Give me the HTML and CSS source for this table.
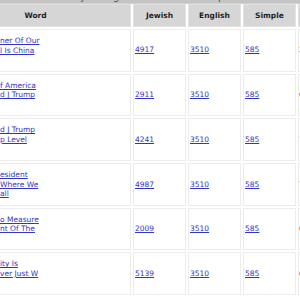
FILE: index.html
```html
<!DOCTYPE html>
<html>
<head>
<meta charset="utf-8">
<link rel="stylesheet" href="styles.css">
</head>
<body>
<div class="topbar"><span class="g g1">y</span><span class="g g2">g</span><span class="g g3">p</span></div>
<table class="results">
  <colgroup>
    <col class="c-word"><col class="c-num"><col class="c-num"><col class="c-num"><col class="c-more">
  </colgroup>
  <thead>
    <tr><th>Word</th><th>Jewish</th><th>English</th><th>Simple</th><th></th></tr>
  </thead>
  <tbody>
    <tr>
      <td class="word"><div class="wrap"><a href="#">ner Of Our<br>l Is China</a></div></td>
      <td class="num"><a href="#">4917</a></td><td class="num"><a href="#">3510</a></td><td class="num"><a href="#">585</a></td><td class="more red">2</td>
    </tr>
    <tr>
      <td class="word"><div class="wrap"><a href="#">f America<br>d J Trump</a></div></td>
      <td class="num"><a href="#">2911</a></td><td class="num"><a href="#">3510</a></td><td class="num"><a href="#">585</a></td><td class="more">6</td>
    </tr>
    <tr>
      <td class="word"><div class="wrap"><a href="#">d J Trump<br>p Level</a></div></td>
      <td class="num"><a href="#">4241</a></td><td class="num"><a href="#">3510</a></td><td class="num"><a href="#">585</a></td><td class="more">1</td>
    </tr>
    <tr>
      <td class="word"><div class="wrap"><a href="#">esident<br>Where We<br>all</a></div></td>
      <td class="num"><a href="#">4987</a></td><td class="num"><a href="#">3510</a></td><td class="num"><a href="#">585</a></td><td class="more">7</td>
    </tr>
    <tr>
      <td class="word"><div class="wrap"><a href="#">o Measure<br>nt Of The</a></div></td>
      <td class="num"><a href="#">2009</a></td><td class="num"><a href="#">3510</a></td><td class="num"><a href="#">585</a></td><td class="more">6</td>
    </tr>
    <tr>
      <td class="word"><div class="wrap"><a href="#">ity Is<br>ver Just W</a></div></td>
      <td class="num"><a href="#">5139</a></td><td class="num"><a href="#">3510</a></td><td class="num"><a href="#">585</a></td><td class="more">6</td>
    </tr>
  </tbody>
</table>
</body>
</html>
```
FILE: styles.css
```css
html, body {
  margin: 0;
  padding: 0;
  overflow: hidden;
  background: #fff;
  font-family: "DejaVu Sans", Verdana, sans-serif;
  font-size: 7.5px;
  line-height: 9.7px;
  color: #222;
}
.topbar {
  height: 3px;
  background: #c4c4c4;
  border-bottom: 1px solid #d0d0d0;
  overflow: hidden;
  position: relative;
}
.g {
  position: absolute;
  top: -8px;
  font-size: 10px;
  line-height: 10px;
  color: #555;
}
.g1 { left: 80px; }
.g2 { left: 113px; }
.g3 { left: 218px; }
.results {
  margin-left: -62px;
  border-collapse: separate;
  border-spacing: 2px;
  table-layout: fixed;
  width: 417px;
  margin-top: -2px;
}
.c-word { width: 191px; }
.c-num { width: 53px; }
.c-more { width: 55px; }
th {
  background: #d6d6d6;
  border: 1px solid #e2e2e2;
  height: 23px;
  padding: 0;
  font-weight: bold;
  text-align: center;
  color: #1e1e1e;
  box-sizing: border-box;
}
thead tr { background: #d6d6d6; }
td {
  border: 1px solid #ececec;
  height: 40.7px;
  padding: 0;
  vertical-align: middle;
}
td.word { padding-left: 59px; }
.wrap { min-height: 29px; }
td.num { padding-left: 1px; }
td.more { padding-left: 0; color: #333; }
td.more.red { color: #b33; }
a { color: #3434c4; text-decoration: underline; }
```
